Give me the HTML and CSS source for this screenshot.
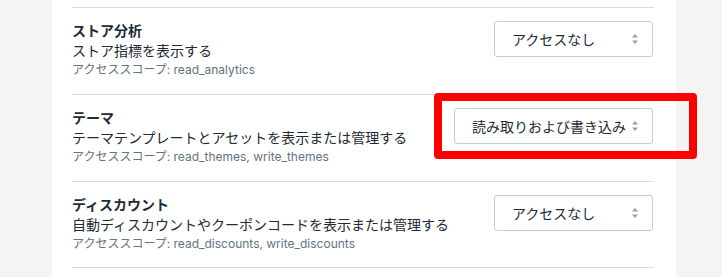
FILE: index.html
```html
<!DOCTYPE html>
<html lang="ja">

<head>
  <meta charset="UTF-8">
  <meta name="viewport" content="width=device-width, initial-scale=1.0">
  <title>アクセス権限</title>
  <link rel="stylesheet" href="styles.css">
</head>

<body>
  <div class="page">
    <article class="panel">
      <section class="scope_row">
        <div class="scope_info">
          <h2 class="scope_title">ストア分析</h2>
          <p class="scope_desc">ストア指標を表示する</p>
          <p class="scope_code">アクセススコープ: read_analytics</p>
        </div>
        <div class="select_wrap">
          <div class="select select_short">
            <span>アクセスなし</span>
            <svg class="arrow" width="6" height="10" viewBox="0 0 6 10"><path d="M3 0L6 3.6H0z M3 10L0 6.4H6z" fill="#9aa1a8"/></svg>
          </div>
        </div>
      </section>

      <section class="scope_row">
        <div class="scope_info">
          <h2 class="scope_title">テーマ</h2>
          <p class="scope_desc">テーマテンプレートとアセットを表示または管理する</p>
          <p class="scope_code">アクセススコープ: read_themes, write_themes</p>
        </div>
        <div class="select_wrap">
          <div class="select select_long">
            <span>読み取りおよび書き込み</span>
            <svg class="arrow" width="6" height="10" viewBox="0 0 6 10"><path d="M3 0L6 3.6H0z M3 10L0 6.4H6z" fill="#9aa1a8"/></svg>
          </div>
          <!-- 강조 표시 -->
          <span class="highlight"></span>
        </div>
      </section>

      <section class="scope_row">
        <div class="scope_info">
          <h2 class="scope_title">ディスカウント</h2>
          <p class="scope_desc">自動ディスカウントやクーポンコードを表示または管理する</p>
          <p class="scope_code">アクセススコープ: read_discounts, write_discounts</p>
        </div>
        <div class="select_wrap">
          <div class="select select_short">
            <span>アクセスなし</span>
            <svg class="arrow" width="6" height="10" viewBox="0 0 6 10"><path d="M3 0L6 3.6H0z M3 10L0 6.4H6z" fill="#9aa1a8"/></svg>
          </div>
        </div>
      </section>
    </article>
  </div>
</body>

</html>
```

FILE: styles.css
```css
* {
  box-sizing: border-box;
  margin: 0;
}

body {
  background-color: #f4f4f4;
  font-family: "Inter", "Noto Sans CJK JP", sans-serif;
  color: #212b36;
  overflow: hidden;
}

.page {
  padding-left: 52px;
  height: 277px;
}

.panel {
  width: 624px;
  height: 277px;
  background-color: #fff;
  padding: 7px 22px 0 20px;
}

.scope_row {
  display: flex;
  justify-content: space-between;
  align-items: flex-start;
  border-top: 1px solid #d9dbdd;
  padding: 13px 0 15px;
  height: 87px;
}

.scope_row:last-child {
  border-bottom: 1px solid #d9dbdd;
}

.scope_title {
  font-size: 14px;
  line-height: 20px;
  font-weight: 700;
}

.scope_desc {
  font-size: 14px;
  line-height: 20px;
}

.scope_code {
  font-size: 12px;
  line-height: 18px;
  color: #637381;
}

.select_wrap {
  position: relative;
  margin-right: 1px;
}

.select {
  display: flex;
  align-items: center;
  justify-content: space-between;
  height: 36px;
  padding: 0 14px 0 17px;
  border: 1px solid #c4cdd5;
  border-radius: 3px;
  background-color: #fff;
  font-size: 14px;
  color: #212b36;
}

.select_short {
  width: 159px;
}

.select_long {
  width: 199px;
}

.arrow {
  display: block;
}

/* 강조 표시 */
.highlight {
  position: absolute;
  left: -20px;
  top: -15px;
  right: -44px;
  bottom: -15px;
  border: 8px solid #ff0000;
  border-radius: 4px;
}
```
